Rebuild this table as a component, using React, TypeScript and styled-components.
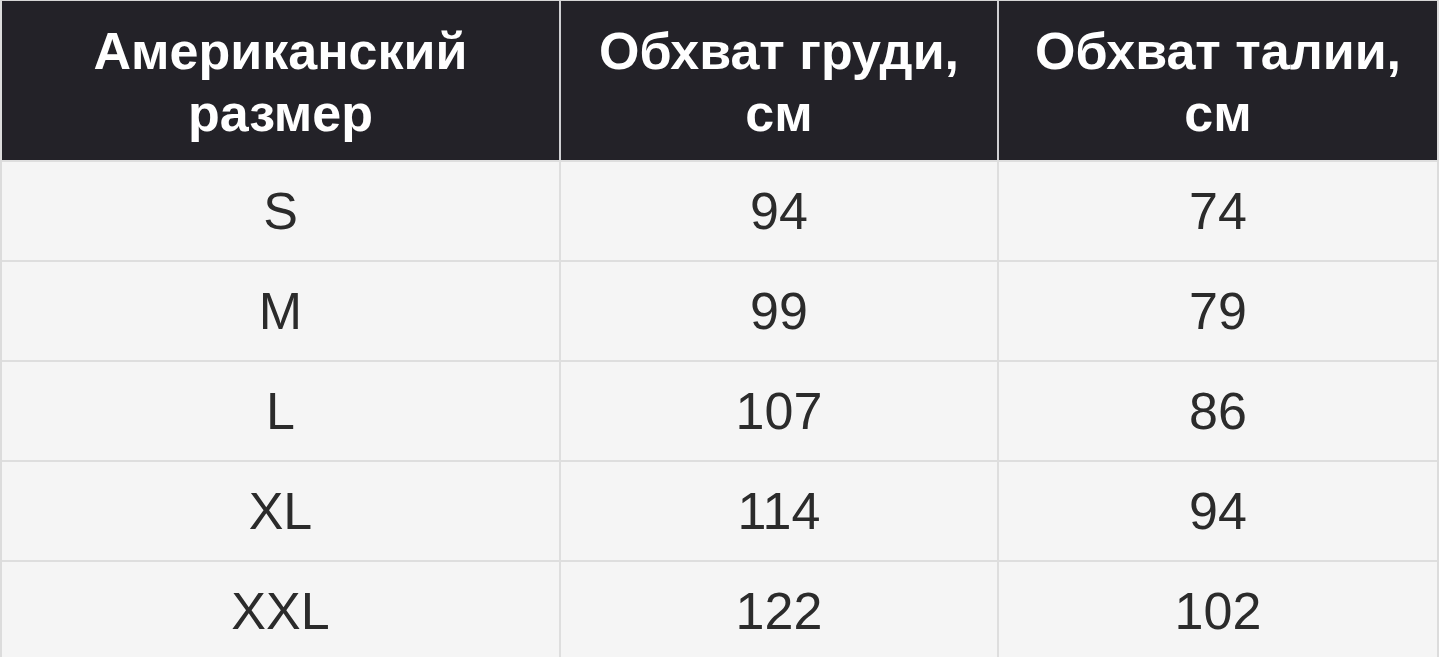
import * as React from 'react'
import styled, { createGlobalStyle } from 'styled-components'

const rows = [
  { size: 'S', chest: 94, waist: 74 },
  { size: 'M', chest: 99, waist: 79 },
  { size: 'L', chest: 107, waist: 86 },
  { size: 'XL', chest: 114, waist: 94 },
  { size: 'XXL', chest: 122, waist: 102 },
]

const headers = [
  ['Американский', 'размер'],
  ['Обхват груди,', 'см'],
  ['Обхват талии,', 'см'],
]

const App = () => {
  return (
    <>
      <GlobalStyle />
      <SizeTable>
        {headers.map((lines, i) => (
          <HeadCell key={i} $first={i === 0}>
            {lines.map((l) => (
              <span key={l}>{l}</span>
            ))}
          </HeadCell>
        ))}
        {rows.map((r) => (
          <React.Fragment key={r.size}>
            <Cell $first>{r.size}</Cell>
            <Cell>{r.chest}</Cell>
            <Cell>{r.waist}</Cell>
          </React.Fragment>
        ))}
      </SizeTable>
    </>
  )
}
export default App

const GlobalStyle = createGlobalStyle`
  html, body {
    margin: 0;
    padding: 0;
    background: #f5f5f5;
    overflow: hidden;
  }
  body {
    font-family: "Liberation Sans", Arial, sans-serif;
  }
`

const SizeTable = styled.div`
  display: grid;
  grid-template-columns: 557px 438px 1fr;
  grid-template-rows: 159px repeat(5, 100px);
  border-top: 1px solid #d6d6d6;
  border-left: 2px solid #dcdcdc;
  border-right: 2px solid #dcdcdc;
  background: #f5f5f5;
`

const HeadCell = styled.div<{ $first?: boolean }>`
  box-sizing: border-box;
  padding-top: 2px;
  background: #232228;
  border-left: ${({ $first }) => ($first ? 'none' : '2px solid #cfcfd2')};
  display: flex;
  flex-direction: column;
  align-items: center;
  justify-content: center;
  color: #ffffff;
  font-weight: 700;
  font-size: 52px;
  line-height: 62px;
  text-align: center;
`

const Cell = styled.div<{ $first?: boolean }>`
  box-sizing: border-box;
  border-top: 2px solid #dedede;
  border-left: ${({ $first }) => ($first ? 'none' : '2px solid #dedede')};
  display: flex;
  align-items: center;
  justify-content: center;
  color: #2b2b2b;
  font-size: 52px;
`
